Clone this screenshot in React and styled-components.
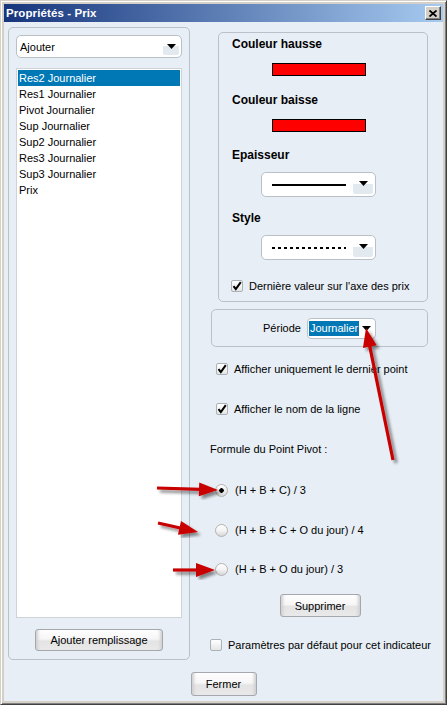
import React from 'react'
import styled, { createGlobalStyle } from 'styled-components'

const GlobalStyle = createGlobalStyle`
  body {
    margin: 0;
    background: #fff;
    font-family: "Liberation Sans", Arial, sans-serif;
    font-size: 11px;
    color: #000;
  }
`

const items = [
  'Res2 Journalier',
  'Res1 Journalier',
  'Pivot Journalier',
  'Sup Journalier',
  'Sup2 Journalier',
  'Res3 Journalier',
  'Sup3 Journalier',
  'Prix',
]

const formulas = [
  { label: '(H + B + C) / 3', top: 27, on: true },
  { label: '(H + B + C + O du jour) / 4', top: 26 },
  { label: '(H + B + O du jour) / 3', top: 25 },
]

// annotation arrows, in page coords (tail -> tip)
const arrows = [
  { x1: 393, y1: 460, x2: 366, y2: 328 },
  { x1: 157, y1: 488, x2: 218, y2: 490 },
  { x1: 158, y1: 523, x2: 198, y2: 532 },
  { x1: 173, y1: 570, x2: 215, y2: 570 },
]

function arrowShape({ x1, y1, x2, y2 }, len = 19, half = 7) {
  const dx = x2 - x1
  const dy = y2 - y1
  const d = Math.hypot(dx, dy)
  const ux = dx / d
  const uy = dy / d
  const bx = x2 - ux * len
  const by = y2 - uy * len
  const pts = `${x2},${y2} ${bx - uy * half},${by + ux * half} ${bx + uy * half},${by - ux * half}`
  return { pts, bx: bx + ux * 2, by: by + uy * 2 }
}

const Arrow = () => (
  <svg width="9" height="5" viewBox="0 0 9 5">
    <path d="M0 0h9L4.5 5z" fill="#000" />
  </svg>
)

const Check = () => (
  <svg width="10" height="10" viewBox="0 0 10 10">
    <path d="M1.5 5.2 L3.8 8 L8.8 1.2" fill="none" stroke="#000" strokeWidth="2" />
  </svg>
)

const App = () => {
  return (
    <>
      <GlobalStyle />
      <Frame>
        <TitleBar>
          <span>Propriétés - Prix</span>
          <CloseBtn>
            <svg width="8" height="7" viewBox="0 0 8 7">
              <path d="M0.5 0.5 L7.5 6.5 M7.5 0.5 L0.5 6.5" stroke="#000" strokeWidth="1.8" />
            </svg>
          </CloseBtn>
        </TitleBar>
        <Body>
          <Main>
            <LeftPanel>
              <Select>
                <span>Ajouter</span>
                <SelectBtn>
                  <Arrow />
                </SelectBtn>
              </Select>
              <List>
                {items.map((it, i) => (
                  <ListItem key={it} $selected={i === 0}>
                    {it}
                  </ListItem>
                ))}
              </List>
              <Button $w={128}>Ajouter remplissage</Button>
            </LeftPanel>

            <RightCol>
              <Group>
                <Label $gap={0}>Couleur hausse</Label>
                <Swatch />
                <Label $gap={17}>Couleur baisse</Label>
                <Swatch />
                <Label $gap={16}>Epaisseur</Label>
                <LineCombo>
                  <LineSample />
                  <ComboBtn>
                    <Arrow />
                  </ComboBtn>
                </LineCombo>
                <Label $gap={14}>Style</Label>
                <LineCombo>
                  <LineSample $dashed />
                  <ComboBtn>
                    <Arrow />
                  </ComboBtn>
                </LineCombo>
                <CheckRow $top={19} $left={-1} $gap={6}>
                  <CheckBox>
                    <Check />
                  </CheckBox>
                  Dernière valeur sur l'axe des prix
                </CheckRow>
              </Group>

              <PeriodPanel>
                <span>Période</span>
                <PeriodCombo>
                  <Highlight>Journalier</Highlight>
                  <Arrow />
                </PeriodCombo>
              </PeriodPanel>

              <CheckRow $top={15} $left={6} $gap={6}>
                <CheckBox>
                  <Check />
                </CheckBox>
                Afficher uniquement le dernier point
              </CheckRow>
              <CheckRow $top={26} $left={6} $gap={6}>
                <CheckBox>
                  <Check />
                </CheckBox>
                Afficher le nom de la ligne
              </CheckRow>

              <Caption>Formule du Point Pivot :</Caption>

              {formulas.map((f) => (
                <CheckRow key={f.label} $top={f.top} $left={5} $gap={7}>
                  <Radio $on={f.on} />
                  {f.label}
                </CheckRow>
              ))}

              <Button $w={81} $h={23} $top={18} $center>
                Supprimer
              </Button>

              <CheckRow $top={21} $left={0} $gap={6}>
                <CheckBox />
                Paramètres par défaut pour cet indicateur
              </CheckRow>
            </RightCol>
          </Main>
          <Footer>
            <Button $w={66} $h={24}>
              Fermer
            </Button>
          </Footer>
        </Body>

        <Overlay width="447" height="705" viewBox="0 0 447 705">
          <defs>
            <filter id="arrowShadow" x="-20%" y="-20%" width="140%" height="140%">
              <feDropShadow dx="3" dy="3" stdDeviation="1.6" floodColor="#000" floodOpacity="0.45" />
            </filter>
          </defs>
          {arrows.map((a, i) => {
            const s = arrowShape(a)
            return (
              <g key={i} filter="url(#arrowShadow)">
                <line x1={a.x1} y1={a.y1} x2={s.bx} y2={s.by} stroke="#c80000" strokeWidth="3.2" />
                <polygon points={s.pts} fill="#c80000" />
              </g>
            )
          })}
        </Overlay>
      </Frame>
    </>
  )
}

export default App

const Frame = styled.div`
  position: relative;
  width: 447px;
  height: 705px;
  box-sizing: border-box;
  padding: 3px;
  background: #e7eef5;
  border: 1px solid;
  border-color: #d4d0c8 #404040 #404040 #d4d0c8;
  box-shadow: inset 1px 1px #fff, inset -1px -1px #808080, inset 2px 2px #d4d0c8,
    inset -2px -2px #d4d0c8, inset 3px 3px #d4d0c8, inset -3px -3px #d4d0c8;
  display: flex;
  flex-direction: column;
`

const TitleBar = styled.div`
  height: 18px;
  flex-shrink: 0;
  display: flex;
  align-items: center;
  justify-content: space-between;
  padding: 0 2px 0 2px;
  background: linear-gradient(to right, #16357c, #a6caf0);
  color: #fff;
  font-weight: bold;
  font-size: 11.5px;
  letter-spacing: 0.1px;
`

const CloseBtn = styled.div`
  width: 16px;
  height: 14px;
  box-sizing: border-box;
  background: #d4d0c8;
  border: 1px solid;
  border-color: #fff #404040 #404040 #fff;
  box-shadow: inset -1px -1px #808080;
  display: flex;
  align-items: center;
  justify-content: center;
`

const Body = styled.div`
  flex: 1;
  display: flex;
  flex-direction: column;
  padding: 5px 4px 5px 4px;
  min-height: 0;
`

const Main = styled.div`
  height: 633px;
  display: flex;
`

const LeftPanel = styled.div`
  width: 182px;
  box-sizing: border-box;
  border: 1px solid #b9c1c9;
  border-radius: 5px;
  padding: 7px 7px 8px 7px;
  display: flex;
  flex-direction: column;
  align-items: center;
`

const Select = styled.div`
  align-self: stretch;
  height: 23px;
  box-sizing: border-box;
  background: #fff;
  border: 1px solid #b8c0c8;
  border-radius: 5px;
  display: flex;
  align-items: center;
  justify-content: space-between;
  padding: 0 2px 0 3px;
  font-size: 11px;
`

const SelectBtn = styled.div`
  width: 16px;
  height: 17px;
  display: flex;
  align-items: center;
  justify-content: center;
  background: linear-gradient(#fff 0%, #fff 50%, #e2eaf0 50%, #e2eaf0 100%);
  border-radius: 2px;
`

const List = styled.div`
  align-self: stretch;
  flex: 1;
  margin-top: 10px;
  box-sizing: border-box;
  background: #fff;
  border: 1px solid #cdd3d9;
  padding: 1px;
`

const ListItem = styled.div`
  height: 16px;
  line-height: 16px;
  padding-left: 1px;
  font-size: 11px;
  background: ${(p) => (p.$selected ? '#0078b6' : 'transparent')};
  color: ${(p) => (p.$selected ? '#fff' : '#000')};
`

const Button = styled.div`
  width: ${(p) => p.$w}px;
  height: ${(p) => p.$h || 22}px;
  margin-top: ${(p) => p.$top ?? 11}px;
  align-self: ${(p) => (p.$center ? 'center' : 'auto')};
  box-sizing: border-box;
  display: flex;
  align-items: center;
  justify-content: center;
  border: 1px solid #a4a8ac;
  border-radius: 3px;
  background: linear-gradient(#fefefe 0%, #f6f6f6 45%, #e4e4e4 55%, #e9e9e9 100%);
  box-shadow: inset 5px 0 3px -3px #d0d0d0, inset -5px 0 3px -3px #d0d0d0;
  font-size: 11px;
`

const RightCol = styled.div`
  width: 220px;
  margin-left: 20px;
  display: flex;
  flex-direction: column;
  align-items: flex-start;
`

const Group = styled.div`
  margin: 5px 0 0 8px;
  width: 210px;
  height: 270px;
  box-sizing: border-box;
  border: 1px solid #b9c1c9;
  border-radius: 5px;
  padding: 4px 0 0 13px;
  display: flex;
  flex-direction: column;
  align-items: flex-start;
`

const Label = styled.div`
  margin-top: ${(p) => p.$gap}px;
  font-weight: bold;
  font-size: 12px;
  line-height: 14px;
`

const Swatch = styled.div`
  width: 94px;
  height: 13px;
  box-sizing: border-box;
  margin: 12px 0 0 40px;
  background: #ff0000;
  border: 1px solid #000;
`

const LineCombo = styled.div`
  width: 115px;
  height: 25px;
  margin: 10px 0 0 29px;
  box-sizing: border-box;
  background: #fff;
  border: 1px solid #b8c0c8;
  border-radius: 5px;
  display: flex;
  align-items: center;
  justify-content: space-between;
  padding: 0 2px 0 10px;
`

const LineSample = styled.div`
  width: 74px;
  height: 2px;
  background: ${(p) =>
    p.$dashed
      ? 'repeating-linear-gradient(to right, #000 0 3px, transparent 3px 6px)'
      : '#000'};
`

const ComboBtn = styled.div`
  width: 20px;
  height: 19px;
  display: flex;
  align-items: center;
  justify-content: center;
  padding-bottom: 2px;
  box-sizing: border-box;
  background: linear-gradient(#fff 0%, #fff 45%, #e2eaf0 45%, #e2eaf0 100%);
  border-radius: 2px;
`

const CheckRow = styled.div`
  display: flex;
  align-items: center;
  gap: ${(p) => p.$gap}px;
  height: 14px;
  margin-top: ${(p) => p.$top}px;
  margin-left: ${(p) => p.$left}px;
  font-size: 11px;
  white-space: nowrap;
`

const CheckBox = styled.div`
  width: 12px;
  height: 12px;
  box-sizing: border-box;
  border: 1px solid #a9b1b9;
  border-radius: 2px;
  background: linear-gradient(#fff, #e6e6e6);
  display: flex;
  align-items: center;
  justify-content: center;
  flex-shrink: 0;
`

const Radio = styled.div`
  width: 13px;
  height: 13px;
  box-sizing: border-box;
  border: 1px solid #b2b2b2;
  border-radius: 50%;
  background: ${(p) =>
    p.$on
      ? 'radial-gradient(circle, #000 0 2px, transparent 2.5px), linear-gradient(#fff, #d8d8d8)'
      : 'linear-gradient(#fff 0%, #f4f4f4 50%, #d6d6d6 100%)'};
  flex-shrink: 0;
`

const PeriodPanel = styled.div`
  margin: 7px 0 0 1px;
  width: 217px;
  height: 38px;
  box-sizing: border-box;
  border: 1px solid #b9c1c9;
  border-radius: 5px;
  display: flex;
  align-items: center;
  justify-content: center;
  gap: 6px;
  font-size: 11px;
`

const PeriodCombo = styled.div`
  width: 69px;
  height: 21px;
  box-sizing: border-box;
  background: #fff;
  border: 1px solid #b8c0c8;
  border-radius: 4px;
  display: flex;
  align-items: center;
  gap: 3px;
  padding-left: 1px;
`

const Highlight = styled.span`
  background: #0078b6;
  color: #fff;
  line-height: 15px;
  padding: 0 1px;
`

const Caption = styled.div`
  margin-top: 26px;
  height: 14px;
  line-height: 14px;
  font-size: 11px;
`

const Footer = styled.div`
  display: flex;
  justify-content: center;
  padding-top: 1px;
`

const Overlay = styled.svg`
  position: absolute;
  left: -1px;
  top: -1px;
  pointer-events: none;
`
